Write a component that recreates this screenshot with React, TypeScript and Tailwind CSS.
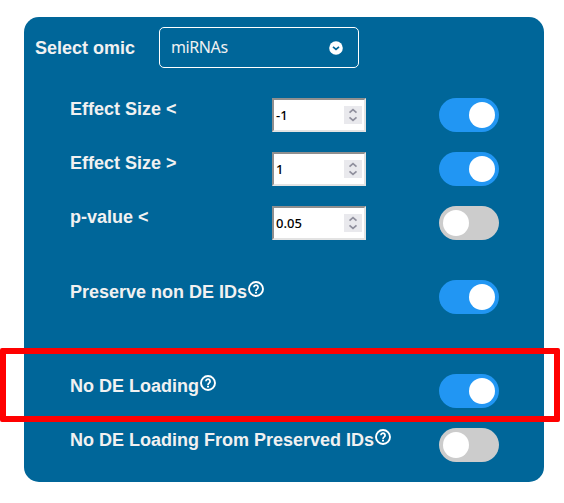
function Toggle({ on }: { on: boolean }) {
  return (
    <div className={`flex h-[34px] w-[60px] items-center rounded-full px-1 ${on ? 'justify-end bg-[#2196f3]' : 'justify-start bg-[#ccc]'}`}>
      <div className="size-[26px] rounded-full bg-white" />
    </div>
  );
}

function HelpIcon() {
  return (
    <svg className="mt-px ml-px size-4" viewBox="0 0 16 16" fill="none" stroke="#ffffff">
      <circle cx="8" cy="8" r="7" strokeWidth="1.9" />
      <path d="M5.9 6.2a2.1 2.1 0 1 1 3.4 1.7C8.4 8.6 8 8.9 8 10" strokeWidth="1.7" />
      <path d="M8 10.8v1.8" strokeWidth="2" />
    </svg>
  );
}

function NumberField({ value }: { value: string }) {
  return (
    <div className="flex h-[34px] w-[94px] items-center justify-between border-2 border-t-[#8f8f8f] border-r-[#e3e3e3] border-b-[#e3e3e3] border-l-[#8f8f8f] bg-white px-[2px]">
      <span className="font-['Noto_Sans',sans-serif] text-[13px] leading-none font-medium text-black">{value}</span>
      <div className="flex h-[18px] w-[18px] items-center justify-center bg-[#e9e9ed]">
        <svg width="18" height="18" viewBox="0 0 18 18" fill="none" stroke="#8f8f9d" strokeWidth="1.7">
          <path d="M5.5 6.7 9 3.7l3.5 3M5.5 11.3 9 14.3l3.5-3" />
        </svg>
      </div>
    </div>
  );
}

function Row({ label, value, on, help }: { label: string; value?: string; on: boolean; help?: boolean }) {
  return (
    <div className="flex h-[34px]">
      <div className={`flex shrink-0 items-start whitespace-nowrap ${value ? 'w-[202px]' : 'w-[369px]'}`}>
        <span className={help ? 'leading-6' : 'leading-[22px]'}>{label}</span>
        {help && <HelpIcon />}
      </div>
      {value && (
        <div className="w-[167px] shrink-0">
          <NumberField value={value} />
        </div>
      )}
      <Toggle on={on} />
    </div>
  );
}

export default function App() {
  return (
    <div className="relative h-[503px] w-[564px] overflow-hidden bg-white pt-[17px] pl-6 font-['Liberation_Sans',Arial,sans-serif] text-lg font-bold text-[#f1f1f1]">
      <div className="h-[465px] w-[520px] rounded-[15px] bg-[#006699] pt-[10px] pl-[11px]">
        <div className="flex h-[41px] items-center">
          <span className="w-[124px] leading-[22px]">Select omic</span>
          <div className="flex h-[41px] w-[200px] items-center justify-between rounded-[5px] border border-white pr-[15px] pl-[11px] font-['Noto_Sans',sans-serif] text-base font-normal">
            <span className="pb-0.5 tracking-[-0.4px]">miRNAs</span>
            <svg width="14" height="14" viewBox="0 0 14 14">
              <circle cx="7" cy="7" r="6.8" fill="#fff" />
              <path d="M4 5.8 7 8.3l3-2.5" fill="none" stroke="#006699" strokeWidth="1.7" />
            </svg>
          </div>
        </div>
        <div className="flex flex-col gap-5 pt-[30px] pl-[35px]">
          <Row label="Effect Size &lt;" value="-1" on />
          <Row label="Effect Size &gt;" value="1" on />
          <Row label="p-value &lt;" value="0.05" on={false} />
        </div>
        <div className="pt-10 pl-[35px]">
          <Row label="Preserve non DE IDs" on help />
        </div>
        <div className="flex flex-col gap-5 pt-[60px] pl-[35px]">
          <Row label="No DE Loading" on help />
          <Row label="No DE Loading From Preserved IDs" on={false} help />
        </div>
      </div>
      <div className="absolute top-[348px] left-0 h-[74px] w-[560px] rounded-[2px] border-6 border-[#ff0000]" />
    </div>
  );
}
